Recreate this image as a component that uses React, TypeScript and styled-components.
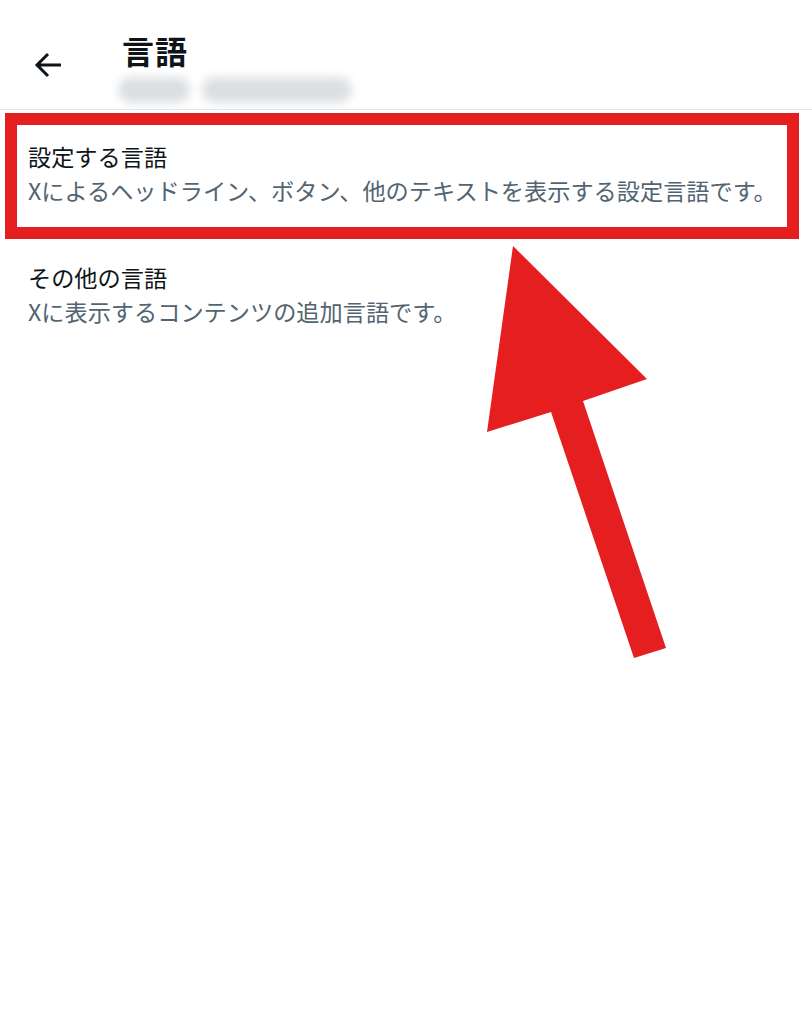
import React from "react";
import styled, { createGlobalStyle } from "styled-components";

const Global = createGlobalStyle`
  html, body {
    margin: 0;
    padding: 0;
    background: #ffffff;
  }
  body {
    font-family: "Noto Sans CJK JP", "Noto Sans", "Liberation Sans", sans-serif;
    color: #0f1419;
  }
`;

const Page = styled.div`
  position: relative;
  width: 812px;
  height: 1024px;
  background: #ffffff;
  overflow: hidden;
`;

const Header = styled.header`
  height: 109px;
  display: flex;
  align-items: flex-start;
  border-bottom: 1px solid #e3e6e8;
`;

const BackButton = styled.button`
  width: 122px;
  height: 100%;
  border: none;
  background: transparent;
  padding: 52px 0 0 34px;
  display: flex;
  align-items: flex-start;
  color: #0f1419;
  cursor: pointer;
`;

const TitleBlock = styled.div`
  display: flex;
  flex-direction: column;
  padding-top: 29px;
`;

const Title = styled.h1`
  margin: 0;
  font-size: 32px;
  line-height: 42px;
  font-weight: 700;
  letter-spacing: 1px;
`;

const Blurred = styled.div`
  display: flex;
  gap: 12px;
  margin: 6px 0 0 -4px;
  filter: blur(5px);
`;

const Smudge = styled.span<{ $w: number }>`
  display: block;
  width: ${(p) => p.$w}px;
  height: 26px;
  border-radius: 13px;
  background: #dcdfe2;
`;

const List = styled.div`
  display: flex;
  flex-direction: column;
  padding-top: 3px;
`;

const Item = styled.div<{ $marked?: boolean }>`
  display: flex;
  flex-direction: column;
  margin: ${(p) => (p.$marked ? "0 13px 0 5px" : "0")};
  padding: ${(p) => (p.$marked ? "14px 11px 20px" : "21px 28px 20px")};
  border: ${(p) => (p.$marked ? "12px solid #e51e20" : "none")};
`;

const ItemTitle = styled.div`
  font-size: 23.2px;
  line-height: 34px;
  color: #0f1419;
`;

const ItemText = styled.div`
  font-size: 23.2px;
  line-height: 34px;
  color: #536471;
  white-space: nowrap;
`;

const Pointer = styled.svg`
  position: absolute;
  left: 0;
  top: 0;
  pointer-events: none;
`;

export default function App() {
  return (
    <Page>
      <Global />
      <Header>
        <BackButton aria-label="戻る">
          <svg width="28" height="26" viewBox="0 0 28 26" fill="none">
            <path
              d="M27 13H3M14 2 3 13l11 11"
              stroke="currentColor"
              strokeWidth="3"
              strokeLinejoin="miter"
            />
          </svg>
        </BackButton>
        <TitleBlock>
          <Title>言語</Title>
          <Blurred>
            <Smudge $w={72} />
            <Smudge $w={150} />
          </Blurred>
        </TitleBlock>
      </Header>
      <List>
        <Item $marked>
          <ItemTitle>設定する言語</ItemTitle>
          <ItemText>Xによるヘッドライン、ボタン、他のテキストを表示する設定言語です。</ItemText>
        </Item>
        <Item>
          <ItemTitle>その他の言語</ItemTitle>
          <ItemText>Xに表示するコンテンツの追加言語です。</ItemText>
        </Item>
      </List>
      <Pointer width="812" height="1024" viewBox="0 0 812 1024">
        <polygon
          points="513,246 647,379 583,401 666,648 634,658 551,412 487,432"
          fill="#e51e20"
        />
      </Pointer>
    </Page>
  );
}
